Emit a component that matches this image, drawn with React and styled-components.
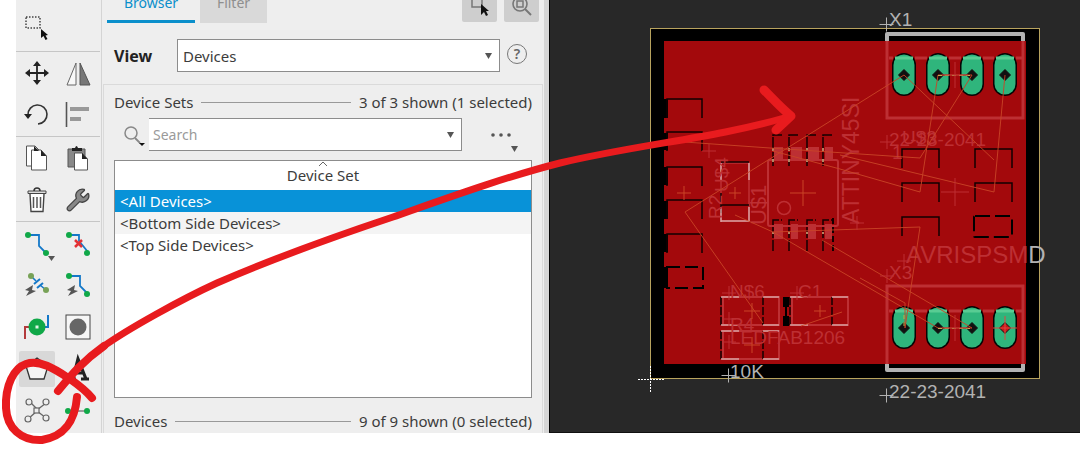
import React from "react";
import styled, { createGlobalStyle } from "styled-components";
import { Wrench } from "lucide-react";

const GlobalStyle = createGlobalStyle`
  * { box-sizing: border-box; }
  body {
    margin: 0;
    background: #fff;
    color: #3c3c3c;
    font-family: "Noto Sans", "Open Sans", sans-serif;
    font-size: 14px;
    line-height: 20px;
    overflow: hidden;
  }
  button, input, select { font: inherit; color: inherit; margin: 0; }
`;

const Page = styled.div`
  position: relative;
  padding: 0 0 16px 16px;
`;
const Workspace = styled.main`
  display: flex;
  background: #eee;
`;

/* Tool palette */
const Palette = styled.nav`
  flex: 0 0 84px;
`;
const ToolGroup = styled.div`
  display: grid;
  grid-template-columns: 42px 42px;
  grid-auto-rows: 42px;
  padding: ${(p) => (p.$first ? "6px 0 3px" : "0")};
  border-bottom: ${(p) => (p.$last ? "0" : "1px solid #c6c6c6")};
`;
const ToolButton = styled.button`
  display: flex;
  align-items: center;
  justify-content: center;
  margin: 3px;
  padding: 0;
  border: 0;
  border-radius: 2px;
  background: ${(p) => (p.$active ? "#d8d8d8" : "transparent")};
`;
const Glyph = styled.svg`
  display: block;
  flex: none;
  overflow: visible;
`;

/* Browser panel */
const Panel = styled.section`
  flex: 0 0 448px;
  margin-left: 1px;
  border-left: 1px solid #d4d4d4;
  border-right: 5px solid #d5d5d5;
`;
const TopBar = styled.div`
  display: flex;
  height: 38px;
  margin-top: -15px;
  padding: 0 5px;
`;
const Tab = styled.button`
  width: ${(p) => p.$width}px;
  margin-right: 5px;
  padding: 0;
  border: 0;
  border-bottom: 3px solid ${(p) => (p.$active ? "#0a8fcb" : "#d9d9d9")};
  background: ${(p) => (p.$active ? "transparent" : "#d9d9d9")};
  color: ${(p) => (p.$active ? "#0a8fcb" : "#8f8f8f")};
`;
const TopActions = styled.div`
  display: flex;
  gap: 7px;
  margin-left: auto;
  padding-bottom: 1px;
`;
const ActionButton = styled.button`
  display: flex;
  align-items: center;
  justify-content: center;
  width: 35px;
  padding: 0;
  border: 0;
  border-radius: 2px;
  background: #cecece;
`;
const ViewRow = styled.div`
  display: flex;
  align-items: center;
  padding: 16px 17px 12px 12px;
  font-size: 15px;
`;
const ViewLabel = styled.label`
  width: 63px;
  font-size: 16px;
  font-weight: 700;
  color: #222;
`;
const Field = styled.div`
  display: flex;
  align-items: center;
  flex: 1;
  height: 33px;
  border: 1px solid #8c8c8c;
  border-left-width: ${(p) => (p.$openLeft ? "0" : "1px")};
  background: #fff;
`;
const Select = styled.select`
  flex: 1;
  align-self: stretch;
  padding: 0 5px;
  border: 0;
  appearance: none;
  background: transparent;
  outline: 0;
`;
const SearchInput = styled.input`
  flex: 1;
  min-width: 0;
  align-self: stretch;
  padding: 0 4px;
  border: 0;
  background: transparent;
  outline: 0;
  font-size: 14px;
  &::placeholder { color: #9a9a9a; opacity: 1; }
`;
const IconButton = styled.button`
  display: flex;
  align-items: center;
  justify-content: center;
  width: ${(p) => p.$width}px;
  padding: 0;
  border: 0;
  background: transparent;
`;
const HelpButton = styled.button`
  width: 20px;
  height: 20px;
  margin: 0 0 3px 7px;
  padding: 0;
  border: 1px solid #777;
  border-radius: 50%;
  background: transparent;
  color: #666;
  font-size: 14px;
  line-height: 18px;
  font-weight: 600;
`;
const Lists = styled.div`
  padding: 7px 10px 2px;
  margin: 0 1px;
  border: 1px solid #dadada;
  border-bottom: 0;
  font-size: 15px;
`;
const Heading = styled.div`
  display: flex;
  align-items: center;
  gap: 8px;
  white-space: nowrap;
`;
const Rule = styled.hr`
  flex: 1;
  margin: 0;
  border: 0;
  border-top: 1px solid #999;
`;
const SearchRow = styled.div`
  display: flex;
  margin: 6px 0 9px;
`;
const TableFrame = styled.div`
  min-height: 238px;
  margin-bottom: 13px;
  border: 1px solid #8c8c8c;
  background: #fff;
`;
const Table = styled.table`
  width: 100%;
  border-collapse: collapse;
  th {
    height: 29px;
    padding: 0;
    font-weight: 400;
    line-height: 16px;
    vertical-align: top;
  }
  td { padding: 0 5px 1px; height: 22px; line-height: 20px; }
`;
const Row = styled.tr`
  background: ${(p) => (p.$selected ? "#0892d8" : p.$striped ? "#f4f4f4" : "#fff")};
  color: ${(p) => (p.$selected ? "#fff" : "inherit")};
`;
const SortMark = styled.svg`
  display: block;
  margin: 0 auto;
`;

/* Board view */
const BoardArea = styled.section`
  flex: 1;
  min-width: 0;
  overflow: hidden;
  background: #282828;
  border-left: 1px solid #050505;
  border-bottom: 1px solid #111;
`;
const BoardDrawing = styled.svg`
  display: block;
  font-family: "Liberation Sans", Arial, sans-serif;
`;
const Annotation = styled.svg`
  position: absolute;
  top: 0;
  left: 0;
  pointer-events: none;
`;

const GREEN = "#10a848";
const BLUE = "#1478c8";

const Bolt = () => <path d="M-4 0 L-12 5 L-8 6 L-11 11 L-1 6 L-5 5Z" fill="#555" />;

const icons = {
  select: (
    <>
      <rect x="-11" y="-10" width="14" height="11" fill="none" stroke="#444" strokeWidth="1.5" strokeDasharray="1.5 1.5" />
      <path d="M4 2 V11 L6.500 9 L8.500 13 L10.500 12 L8.500 8.500 L11 8Z" fill="#111" />
    </>
  ),
  move: (
    <>
      <path d="M-9 0 H9 M0 -9 V9" stroke="#222" strokeWidth="1.8" />
      <path d="M-12 0 L-7 -4 V4Z M12 0 L7 -4 V4Z M0 -12 L-4 -7 H4Z M0 12 L-4 7 H4Z" fill="#222" />
    </>
  ),
  mirror: (
    <>
      <path d="M-12 12 H-3 V-10Z" fill="#f8f8f8" stroke="#666" />
      <path d="M1 12 H11 L1 -10Z" fill="#777" stroke="#555" />
    </>
  ),
  rotate: (
    <>
      <path d="M-9 0 A9.500 9.500 0 1 1 1 9" fill="none" stroke="#333" strokeWidth="1.6" />
      <path d="M-13 -1 H-5 L-9 4Z" fill="#222" />
    </>
  ),
  align: (
    <>
      <path d="M-12.500 -13 V12" stroke="#555" strokeWidth="1.6" />
      <path d="M-9 -8 H10 V-4 H-9Z M-9 2 H2 V6 H-9Z" fill="#999" />
    </>
  ),
  copy: (
    <>
      <path d="M-10.500 -12 H-2 L3 -7 V8 H-10.500Z" fill="#fff" stroke="#555" />
      <path d="M-5.500 -8 H4 L9.500 -2 V12 H-5.500Z" fill="#fff" stroke="#555" />
      <path d="M-3 -12 L2 -7 H-3Z M4 -8 L9.500 -2 H4Z" fill="#222" />
    </>
  ),
  paste: (
    <>
      <path d="M-11 -9 H6 V9 H-11Z" fill="#888" stroke="#555" />
      <path d="M-7 -10 H-4 Q-2.500 -14 -1 -10 H3 V-7 H-7Z" fill="#222" />
      <path d="M-4.500 -5 H3 L8.500 1 V12 H-4.500Z" fill="#fff" stroke="#555" />
      <path d="M3 -5 L8.500 1 H3Z" fill="#222" />
    </>
  ),
  trash: (
    <>
      <path d="M-7 -6 L-6 11.500 H6 L7 -6" fill="#fff" stroke="#444" strokeWidth="1.4" />
      <path d="M-9 -6.500 V-9 H9 V-6.500Z" fill="#ddd" stroke="#444" />
      <path d="M-3 -9 Q-3 -12 0 -12 Q3 -12 3 -9" fill="none" stroke="#333" strokeWidth="1.5" />
      <path d="M-3.500 -3 V8 M0 -3 V8 M3.500 -3 V8" stroke="#555" strokeWidth="1.5" />
    </>
  ),
  wrench: <Wrench x="-14" y="-13" width="26" height="26" fill="#888" stroke="#444" strokeWidth="1.2" />,
  route: (
    <>
      <path d="M-9 -8 H2 V3 L9 10" fill="none" stroke={BLUE} strokeWidth="1.8" />
      <circle cx="-9" cy="-8" r="3" fill={GREEN} />
      <circle cx="9" cy="10" r="3" fill={GREEN} />
      <path d="M11 13 H18 L14.500 18Z" fill="#555" />
    </>
  ),
  ripup: (
    <>
      <path d="M-10 -8 H0 V-2 L9 9" fill="none" stroke={BLUE} strokeWidth="1.8" />
      <circle cx="-10" cy="-8" r="3" fill={GREEN} />
      <circle cx="8" cy="10" r="3" fill={GREEN} />
      <path d="M-4 -3 L3 4 M3 -3 L-4 4" stroke="#e33236" strokeWidth="2.500" />
    </>
  ),
  reroute: (
    <>
      <Bolt />
      <path d="M-6 -9 L-1 -4 M3 0 L9 5" stroke={BLUE} strokeWidth="1.600" />
      <path d="M-3 -1 L3 -6 M0 3 L6 -2" stroke={BLUE} strokeWidth="2" />
      <circle cx="-6" cy="-9" r="3" fill="#78a257" />
      <circle cx="9" cy="5" r="3" fill="#78a257" />
    </>
  ),
  quickroute: (
    <>
      <Bolt />
      <path d="M-10 -9 H1 V1 L8 8" fill="none" stroke={BLUE} strokeWidth="1.800" />
      <circle cx="-10" cy="-9" r="3" fill={GREEN} />
      <circle cx="8" cy="9" r="3" fill={GREEN} />
    </>
  ),
  via: (
    <>
      <path d="M-6 0 H-12 V12" fill="none" stroke="#b33a3c" strokeWidth="2" />
      <path d="M6 0 H11 V-12" fill="none" stroke={BLUE} strokeWidth="2" />
      <circle r="8.500" fill={GREEN} />
      <rect x="-1.500" y="-1.500" width="3" height="3" fill="#dff5e5" />
    </>
  ),
  hole: (
    <>
      <rect x="-13" y="-12" width="24" height="24" fill="#f6f6f6" stroke="#444" />
      <circle cx="-1" r="8.500" fill="#666" />
    </>
  ),
  polygon: <path d="M0 -11 L11 -3 L7 10 H-7 L-11 -3Z" fill="#f4f4f4" stroke="#333" strokeWidth="1.300" />,
  text: <path d="M-9 10 H-3 M2 10 H10 M-6 10 L-1 -10 L7 10 M-4 4 H4" fill="none" stroke="#222" strokeWidth="3.200" />,
  ratsnest: (
    <>
      <path d="M-7 -9 L0 -2 M9 -8 L0 -1 M-9 8 L0 0 M9 7 L0 0" stroke="#666" strokeWidth="1.400" />
      <g fill="#eee" stroke="#666" strokeWidth="1.200">
        <circle cx="-8" cy="-9" r="3" />
        <circle cx="9" cy="-9" r="3" />
        <circle cx="-9" cy="8" r="3" />
        <circle cx="9" cy="7" r="3" />
        <rect x="-3" y="-3" width="5" height="5" />
      </g>
    </>
  ),
  signal: (
    <>
      <path d="M-11 0 H8" stroke="#888" strokeWidth="1.600" />
      <circle cx="-11" r="3" fill={GREEN} />
      <circle cx="8" r="3" fill={GREEN} />
    </>
  ),
};

const toolGroups = [
  [["select", "Group"]],
  [["move", "Move"], ["mirror", "Mirror"], ["rotate", "Rotate"], ["align", "Align"]],
  [["copy", "Copy"], ["paste", "Paste"], ["trash", "Delete"], ["wrench", "Change"]],
  [
    ["route", "Route"], ["ripup", "Ripup"], ["reroute", "Autoroute"], ["quickroute", "Quick route"],
    ["via", "Via"], ["hole", "Hole"], ["polygon", "Polygon"], ["text", "Text"],
    ["ratsnest", "Ratsnest"], ["signal", "Signal"],
  ],
];

const Arrow = () => (
  <Glyph width="7" height="6" viewBox="0 0 7 6">
    <path d="M0 0 H7 L3.500 6Z" fill="#555" />
  </Glyph>
);

const SILK = "#bd2f33";
const GREY = "#b2b2b2";

const Cross = ({ x, y, r = 7, color = SILK, width = 1 }) => (
  <path d={`M${x - r} ${y} H${x + r} M${x} ${y - r} V${y + r}`} stroke={color} strokeWidth={width} />
);
const Bracket = ({ x, y, w = 37 }) => (
  <path d={`M${x} ${y + 19} V${y} H${x + w} V${y + 19}`} fill="none" stroke="#120000" strokeWidth="1.500" />
);
const Pad = ({ x, y, barY, hole = "#111" }) => (
  <g>
    <rect x={x - 12} y={y - 22} width="24" height="43" rx="12" fill="#050505" />
    <rect x={x - 10.5} y={y - 20.5} width="21" height="40" rx="10.500" fill="#2fb57c" />
    <path d={`M${x - 9} ${barY} H${x + 9}`} stroke="#58cc93" strokeWidth="3" />
    <path d={`M${x} ${y - 5.5} L${x + 5.5} ${y} L${x} ${y + 5.5} L${x - 5.5} ${y}Z`} fill={hole} stroke="#111" />
  </g>
);
const Chip = ({ x, y }) => (
  <g fill="none">
    <rect x={x + 2} y={y} width="56" height="28" stroke={SILK} strokeWidth="2" />
    <path d={`M${x} ${y} V${y + 28} M${x + 42} ${y} V${y + 28}`} stroke="#150000" strokeWidth="1.500" strokeDasharray="8 2" />
    <path
      d={`M${x} ${y} H${x + 18} M${x + 42} ${y} H${x + 58} M${x} ${y + 28} H${x + 18} M${x + 42} ${y + 28} H${x + 58}`}
      stroke="#d9a0a0" strokeWidth="1.300"
    />
  </g>
);

const padColumns = [904, 938, 972, 1005];

const Board = () => (
  <BoardDrawing width="531" height="432" viewBox="550 0 531 432" role="img" aria-label="Circuit board layout">
    <rect x="650.500" y="28.500" width="389" height="350" fill="#000" stroke="#b8a35e" />
    <rect x="664" y="41" width="362" height="323" fill="#a3090c" />

    <path d="M663 99h5v19h-5z M663 133h5v17h-5z M663 167h5v18h-5z M663 201h5v18h-5z M663 234h5v18h-5z M663 267h5v21h-5z" fill="#000" />
    {[99, 132, 167, 200, 234].map((y) => <Bracket key={y} x={667} y={y} w={35} />)}
    <rect x="667" y="267" width="36" height="21" fill="none" stroke="#000" strokeWidth="2" strokeDasharray="13 5" />
    {[149, 183, 217].map((y) => <Bracket key={y} x={902} y={y} />)}
    {[149, 183].map((y) => <Bracket key={y} x={975} y={y} />)}
    <rect x="974" y="216" width="38" height="21" rx="1" fill="none" stroke="#000" strokeWidth="2" strokeDasharray="15 5" />

    <g fill="none" stroke={SILK} strokeWidth="2">
      <rect x="768" y="160" width="70" height="66" rx="2" />
      <circle cx="784" cy="208" r="6.500" strokeWidth="1.500" />
    </g>
    <path d="M774 147h9v14h-9z M791 147h11v14h-11z M808 147h11v14h-11z M825 147h8v14h-8z M774 224h9v15h-9z M791 224h7v15h-7z M808 224h8v15h-8z M825 224h7v15h-7z" fill={SILK} />
    {[773, 789, 807, 823].map((x) => (
      <g key={x} fill="none" stroke="#150000" strokeWidth="1.500">
        <path d={`M${x} 166 V135 H${x + 9}`} strokeDasharray="14 1" />
        <path d={`M${x} 251 V220 H${x + 9}`} strokeDasharray="11 2" />
        <path d={`M${x} 148 v3 M${x} 159 v3 M${x} 232 v2`} stroke="#e0b080" />
      </g>
    ))}
    <path d="M833 251 V218" stroke="#150000" strokeWidth="2" strokeDasharray="6 3" />

    <g fill="none">
      <rect x="721" y="163" width="28" height="58" stroke={SILK} strokeWidth="1.500" />
      <path d="M721 162 H749 M721 205 H749 M721 193 V213" stroke="#150000" strokeWidth="1.500" />
      <path d="M721 163 V180 M749 163 V180 M721 207 V222 M749 207 V222 M721 221 H749" stroke="#d9a0a0" strokeWidth="1.500" />
    </g>
    <Chip x={721} y={297} />
    <Chip x={790} y={297} />
    <Chip x={721} y={331} />
    <path d="M783 297h6v10h-2v9h2v10h-6v-10h2v-9h-2z" fill="#000" />

    <g fontSize="19" fill={SILK}>
      <text x="730" y="298">N$6</text>
      <text x="798" y="298">C1</text>
      <text x="730" y="331">R4</text>
      <text x="730" y="344">LEDFAB1206</text>
      <text x="889" y="146">22-23-2041</text>
      <text x="902" y="144">U$3</text>
      <text x="889" y="279">X3</text>
      <text x="892" y="159">1</text>
      <text transform="translate(722 219) rotate(-90)">R2</text>
      <text transform="translate(728 192) rotate(-90)">U$4</text>
      <text transform="translate(766 225) rotate(-90)" fontSize="22">U$1</text>
      <text transform="translate(859 224) rotate(-90)" fontSize="23">ATTINY45SI</text>
      <text x="906" y="263" fontSize="24">AVRISPSM<tspan fill={GREY}>D</tspan></text>
    </g>
    <g fontSize="19" fill={GREY}>
      <text x="889" y="26">X1</text>
      <text x="889" y="398">22-23-2041</text>
      <text x="730" y="378">10K</text>
    </g>

    {padColumns.map((x) => <Pad key={x} x={x} y={75} barY={58} />)}
    {padColumns.map((x, i) => <Pad key={x} x={x} y={328} barY={311} hole={i === 3 ? "#c81418" : "#111"} />)}
    <g fill="none" stroke={SILK} strokeWidth="3">
      <path d="M887 41 V118 H1023 V41" />
      <path d="M887 365 V286 H1023 V365" />
      <path d="M889 58 H893 M915 58 H927 M949 58 H961 M983 58 H994 M1016 58 H1022 M889 311 H893 M915 311 H927 M949 311 H961 M983 311 H994 M1016 311 H1022" />
    </g>
    <path d="M887 41 V34 H1023 V41 M887 364 V370 H1023 V364" fill="none" stroke={GREY} strokeWidth="4" strokeLinejoin="round" />

    <g fill="none" stroke="#ca4527" strokeWidth="1" opacity="0.9">
      <path d="M904 75 L685 212 L763 323 M670 141 L770 148 L920 158 L972 75 H938 L920 192 L840 169 L773 151 M904 75 L994 160 M1005 75 L994 192 L840 155" />
      <path d="M735 215 L773 232 L938 328 H972 M773 232 L920 227 L905 328 M972 328 L822 240 M905 328 V303 L860 278 M801 326 L842 312" />
    </g>
    <path d="M938 75.500 H972 M938 328.500 H972 M904 315 V328" stroke="#bdb24d" strokeDasharray="4 3" />
    <Cross x={684} y={193} color="#ca4527" />
    <Cross x={735} y={193} color="#ca4527" r={6} />
    <Cross x={803} y={193} color="#ca4527" r={13} />
    <Cross x={955} y={192} r={14} />
    <Cross x={955} y={75} r={13} />
    <Cross x={955} y={328} r={13} />
    <Cross x={1005} y={328} r={12} color="#da4941" />
    <Cross x={752} y={311} color="#ca4527" r={8} />
    <Cross x={820} y={311} color="#ca4527" r={6} />
    <Cross x={752} y={345} color="#ca4527" r={8} />
    <Cross x={729} y={293} />
    <Cross x={797} y={293} />
    <Cross x={729} y={319} />
    <Cross x={729} y={342} />
    <Cross x={709} y={151} />
    <Cross x={887} y={142} />
    <Cross x={857} y={223} />
    <Cross x={904} y={261} />
    <Cross x={887} y={276} />
    <Cross x={728.5} y={375.5} color={GREY} />
    <Cross x={886.5} y={24.5} color={GREY} />
    <Cross x={886.5} y={395.5} color={GREY} />
    <path d="M638 379.500 H664 M650.500 366 V392" stroke="#fff" strokeDasharray="2 1" />
  </BoardDrawing>
);

const deviceSets = ["<All Devices>", "<Bottom Side Devices>", "<Top Side Devices>"];

export default function App() {
  return (
    <Page>
      <GlobalStyle />
      <Workspace>
        <Palette aria-label="Tools">
          {toolGroups.map((tools, i) => (
            <ToolGroup key={i} $first={i === 0} $last={i === toolGroups.length - 1}>
              {tools.map(([name, label]) => (
                <ToolButton key={name} type="button" aria-label={label} $active={name === "polygon"}>
                  <Glyph width="30" height="30" viewBox="-15 -15 30 30">{icons[name]}</Glyph>
                </ToolButton>
              ))}
            </ToolGroup>
          ))}
        </Palette>

        <Panel>
          <TopBar>
            <Tab type="button" $active $width={88}>Browser</Tab>
            <Tab type="button" $width={67}>Filter</Tab>
            <TopActions>
              <ActionButton type="button" aria-label="Select in board">
                <Glyph width="30" height="30" viewBox="-15 -15 30 30">
                  <path d="M-8 -6 H2 V3 H-8Z" fill="none" stroke="#777" strokeWidth="1.500" />
                  <path d="M1 0 V11 L4 8 L6 12 L8 11 L6 7 L9 7Z" fill="#111" />
                </Glyph>
              </ActionButton>
              <ActionButton type="button" aria-label="Zoom to selection">
                <Glyph width="30" height="30" viewBox="-15 -15 30 30">
                  <circle cx="-2" cy="0" r="7" fill="none" stroke="#777" strokeWidth="1.600" />
                  <path d="M-5 -3 H1 V3 H-5Z" fill="none" stroke="#777" strokeWidth="1.500" />
                  <path d="M3 5 L9 11" stroke="#777" strokeWidth="2" />
                </Glyph>
              </ActionButton>
            </TopActions>
          </TopBar>

          <ViewRow>
            <ViewLabel htmlFor="view">View</ViewLabel>
            <Field>
              <Select id="view" defaultValue="Devices"><option>Devices</option></Select>
              <IconButton as="span" $width={21}><Arrow /></IconButton>
            </Field>
            <HelpButton type="button" aria-label="Help">?</HelpButton>
          </ViewRow>

          <Lists>
            <Heading><span>Device Sets</span><Rule /><span>3 of 3 shown (1 selected)</span></Heading>
            <SearchRow>
              <IconButton type="button" aria-label="Search options" $width={35}>
                <Glyph width="30" height="30" viewBox="-15 -15 30 30">
                  <circle cx="-1" cy="-2" r="6" fill="none" stroke="#888" strokeWidth="1.500" />
                  <path d="M3 3 L8 8" stroke="#888" strokeWidth="1.800" />
                  <path d="M7 8 H13 L10 11Z" fill="#111" />
                </Glyph>
              </IconButton>
              <Field $openLeft>
                <SearchInput type="text" placeholder="Search" aria-label="Search" />
                <IconButton type="button" aria-label="Recent searches" $width={21}><Arrow /></IconButton>
              </Field>
              <IconButton type="button" aria-label="More options" $width={70}>
                <Glyph width="36" height="30" viewBox="-18 -15 36 30">
                  <circle cx="-4" cy="0" r="1.800" fill="#555" />
                  <circle cx="4" cy="0" r="1.800" fill="#555" />
                  <circle cx="12" cy="0" r="1.800" fill="#555" />
                  <path d="M14 11 H21 L17.500 17Z" fill="#555" />
                </Glyph>
              </IconButton>
            </SearchRow>
            <TableFrame>
              <Table>
                <thead>
                  <tr>
                    <th scope="col">
                      <SortMark width="10" height="6" viewBox="0 0 10 6"><path d="M1 5 L5 1 L9 5" fill="none" stroke="#666" /></SortMark>
                      Device Set
                    </th>
                  </tr>
                </thead>
                <tbody>
                  {deviceSets.map((name, i) => (
                    <Row key={name} $selected={i === 0} $striped={i === 1}><td>{name}</td></Row>
                  ))}
                </tbody>
              </Table>
            </TableFrame>
            <Heading><span>Devices</span><Rule /><span>9 of 9 shown (0 selected)</span></Heading>
          </Lists>
        </Panel>

        <BoardArea><Board /></BoardArea>
      </Workspace>

      <Annotation width="1080" height="449" viewBox="0 0 1080 449" aria-hidden="true">
        <g fill="none" stroke="#e81b1e" strokeLinecap="round" strokeLinejoin="round">
          <path strokeWidth="8" d="M77 397 C75 420 66 436 42 440 C21 441 7 428 6 408 C5 385 14 368 26 364 C40 359 56 370 70 379 C80 386 88 393 92 398" />
          <path strokeWidth="8" d="M58 391 C72 374 83 361 104 346" />
          <path strokeWidth="7" d="M104 346 C128 329 180 300 217 283 C270 260 330 238 393 217 C450 197 505 177 560 163 C640 144 715 138 784 118" />
          <path strokeWidth="9" d="M764 90 C772 98 782 109 791 116 L776 130" />
        </g>
      </Annotation>
    </Page>
  );
}
